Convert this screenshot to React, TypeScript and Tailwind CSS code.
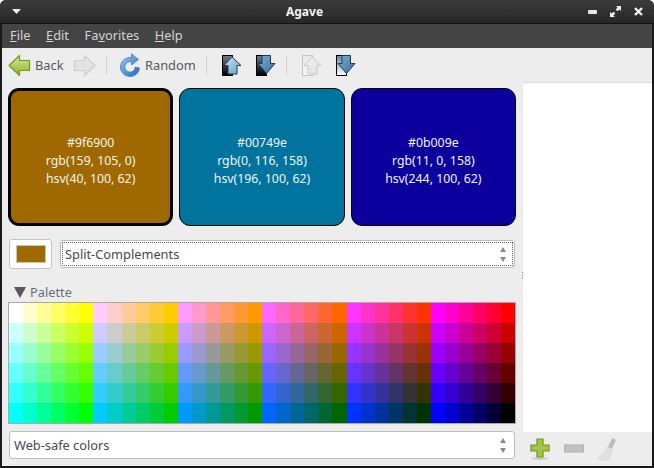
import React from 'react';

const SWATCHES = [
  { hex: '#9f6900', rgb: 'rgb(159, 105, 0)', hsv: 'hsv(40, 100, 62)', cls: 'bg-[#9f6900] border-[3px]' },
  { hex: '#00749e', rgb: 'rgb(0, 116, 158)', hsv: 'hsv(196, 100, 62)', cls: 'bg-[#00749e] border' },
  { hex: '#0b009e', rgb: 'rgb(11, 0, 158)', hsv: 'hsv(244, 100, 62)', cls: 'bg-[#0b009e] border' },
];

const ROWS = [0, 1, 2, 3, 4, 5];
const COLS = Array.from({ length: 36 }, (_, i) => i);

function ArrowLeft() {
  return (
    <svg width="23" height="23" viewBox="0 0 23 23">
      <defs>
        <linearGradient id="backG" x1="0" y1="0" x2="0" y2="1">
          <stop offset="0" stopColor="#dcea96" />
          <stop offset="1" stopColor="#8fb02c" />
        </linearGradient>
      </defs>
      <path
        d="M1 11.5 L11.5 1.5 V6.5 H21.5 V16.5 H11.5 V21.5 Z"
        fill="url(#backG)"
        stroke="#6f9a1c"
        strokeWidth="1.2"
        strokeLinejoin="round"
      />
    </svg>
  );
}

function ArrowRight() {
  return (
    <svg width="23" height="23" viewBox="0 0 23 23">
      <path
        d="M22 11.5 L11.5 1.5 V6.5 H1.5 V16.5 H11.5 V21.5 Z"
        fill="#e4e4e4"
        stroke="#cfcfcf"
        strokeWidth="1.2"
        strokeLinejoin="round"
      />
    </svg>
  );
}

function Refresh() {
  return (
    <svg width="23" height="24" viewBox="0 0 23 24">
      <defs>
        <linearGradient id="refG" x1="0" y1="0" x2="1" y2="1">
          <stop offset="0" stopColor="#a4ccf0" />
          <stop offset="1" stopColor="#1f66b8" />
        </linearGradient>
      </defs>
      <path
        d="M13 4.6 A9.6 9.6 0 1 0 20.6 15 L16.2 14 A5.2 5.2 0 1 1 12.5 8.9 L12.5 12 L19.5 6.5 L12.5 0.8 V4.5 Z"
        fill="url(#refG)"
        stroke="#3f7fc4"
        strokeWidth="0.8"
        strokeLinejoin="round"
      />
    </svg>
  );
}

// page shape with a blue arrow on top, used for the four history buttons
function PageArrow({ dir, disabled, light }: { dir: 'up' | 'down'; disabled?: boolean; light?: boolean }) {
  const id = `${dir}${disabled ? 'D' : ''}${light ? 'L' : ''}`;
  const top = disabled ? '#e8e8e8' : light ? '#5f86a8' : '#6d7f8c';
  const bottom = disabled ? '#f6f6f6' : light ? '#ffffff' : '#000000';
  const edge = disabled ? '#c4c4c4' : '#000000';
  const arrowA = disabled ? '#f2f2f2' : dir === 'up' ? '#d4e8f6' : '#7fadd2';
  const arrowB = disabled ? '#e0e0e0' : dir === 'up' ? '#5f9ccb' : '#3a6f9f';
  const arrowEdge = disabled ? '#c8c8c8' : '#1c3c54';
  const d =
    dir === 'up'
      ? 'M11 3 L20 11.5 H16 V20 H7 V11.5 H3 Z'
      : 'M7 1.5 H15.5 V9.5 H20 L11.5 19.5 L3 9.5 H7 Z';
  return (
    <svg width="21" height="23" viewBox="0 0 21 23">
      <defs>
        <linearGradient id={`page${id}`} x1="0" y1="0" x2="0" y2="1">
          <stop offset="0" stopColor={top} />
          <stop offset="1" stopColor={bottom} />
        </linearGradient>
        <linearGradient id={`arrow${id}`} x1="0" y1="0" x2="1" y2="1">
          <stop offset="0" stopColor={arrowA} />
          <stop offset="1" stopColor={arrowB} />
        </linearGradient>
      </defs>
      <rect x="1.5" y="1.5" width="10" height="20" fill={`url(#page${id})`} stroke={edge} />
      <path d={d} fill={`url(#arrow${id})`} stroke={arrowEdge} strokeLinejoin="round" />
    </svg>
  );
}

function Spinner() {
  return (
    <svg width="10" height="18" viewBox="0 0 10 18" className="shrink-0">
      <path d="M5 2 L8 7 H2 Z" fill="#8a8a8a" />
      <path d="M5 17 L8 12 H2 Z" fill="#8a8a8a" />
    </svg>
  );
}

function Combo({ text, focused }: { text: string; focused?: boolean }) {
  return (
    <div className="h-[28px] flex-1 rounded-[3px] border border-[#bdbdbd] bg-white p-px">
      <div
        className={`flex h-full items-center justify-between pr-[5px] pl-[3px] ${
          focused ? 'outline-1 -outline-offset-1 outline-dotted outline-[#6a6a6a]' : ''
        }`}
      >
        <span className="pt-[2px] text-[12.8px] text-[#444a50]">{text}</span>
        <Spinner />
      </div>
    </div>
  );
}

export default function App() {
  return (
    <div className="flex h-[468px] w-[654px] flex-col overflow-hidden rounded-t-[6px] bg-[#1a1a1a] px-[2px] pb-[2px] font-['Noto_Sans',sans-serif]">
      {/* titlebar */}
      <div className="-mx-[2px] flex h-[24px] shrink-0 items-center justify-between border-b border-[#111] bg-gradient-to-b from-[#3b3b3b] to-[#272727] pr-[11px] pl-[12px]">
        <svg width="9" height="5" viewBox="0 0 9 5">
          <path d="M0 0 H9 L4.5 5 Z" fill="#f0f0f0" />
        </svg>
        <span className="text-[12px] font-bold text-[#f2f2f2]">Agave</span>
        <div className="flex items-center gap-[13px]">
          <svg width="9" height="4" viewBox="0 0 9 4">
            <rect width="9" height="4" rx="1" fill="#e8e8e8" />
          </svg>
          <svg width="11" height="11" viewBox="0 0 11 11">
            <path d="M6 0 H11 V5 L9.4 3.4 L7.5 5.3 L5.7 3.5 L7.6 1.6 Z M0 11 V6 L1.6 7.6 L3.5 5.7 L5.3 7.5 L3.4 9.4 L5 11 Z" fill="#f0f0f0" />
          </svg>
          <svg width="9" height="9" viewBox="0 0 9 9">
            <path d="M1 1 L8 8 M8 1 L1 8" stroke="#f0f0f0" strokeWidth="2.4" />
          </svg>
        </div>
      </div>

      {/* menubar */}
      <div className="flex h-[24px] shrink-0 items-center gap-[15.6px] bg-[#444444] pl-[8px] text-[12.8px] text-[#d4d4d4]">
        <span><u>F</u>ile</span>
        <span><u>E</u>dit</span>
        <span>Fa<u>v</u>orites</span>
        <span><u>H</u>elp</span>
      </div>

      {/* toolbar */}
      <div className="flex h-[34px] shrink-0 items-center bg-[#ededed] pl-[6px] text-[12.8px] text-[#555a5e]">
        <ArrowLeft />
        <span className="ml-[4px] w-[38px] pt-px">Back</span>
        <ArrowRight />
        <div className="mr-[12px] ml-[10px] h-[20px] w-px bg-[#d4d4d4]" />
        <Refresh />
        <span className="ml-[3px] w-[51px] pt-px">Random</span>
        <div className="mr-[14px] ml-[10px] h-[20px] w-px bg-[#d4d4d4]" />
        <PageArrow dir="up" />
        <div className="w-[13px]" />
        <PageArrow dir="down" />
        <div className="mr-[14px] ml-[10px] h-[20px] w-px bg-[#d4d4d4]" />
        <PageArrow dir="up" disabled />
        <div className="w-[13px]" />
        <PageArrow dir="down" light />
      </div>

      <div className="relative flex min-h-0 flex-1 bg-[#ededed]">
        {/* left pane */}
        <div className="flex w-[521px] shrink-0 flex-col pt-[6px] pr-[7px] pl-[6px]">
          <div className="grid h-[138px] grid-cols-3 gap-[6px]">
            {SWATCHES.map((s) => (
              <div
                key={s.hex}
                className={`flex flex-col items-center justify-center rounded-[11px] border-black pt-[8px] text-[12.3px] leading-[18px] text-[#f4f4f4] ${s.cls}`}
              >
                <span>{s.hex}</span>
                <span>{s.rgb}</span>
                <span>{s.hsv}</span>
              </div>
            ))}
          </div>

          <div className="mt-[13px] flex items-center gap-[8px] px-[1px]">
            <div className="flex h-[30px] w-[43px] items-center justify-center rounded-[3px] border border-[#c4c4c4] bg-white">
              <div className="h-[18px] w-[30px] border border-[#c4c4c4] bg-[#9f6900]" />
            </div>
            <Combo text="Split-Complements" focused />
          </div>

          <div className="mt-[14px] flex h-[19px] items-center pl-[6px] text-[12.8px] text-[#6a6e72]">
            <svg width="12" height="11" viewBox="0 0 12 11">
              <path d="M0 0 H12 L6 11 Z" fill="#595959" />
            </svg>
            <span className="ml-[4px]">Palette</span>
          </div>

          <div className="border border-[#a8a8a8]">
            {ROWS.map((r) => (
              <div key={r} className="flex h-[20px]">
                {COLS.map((c) => (
                  <div
                    key={c}
                    className="flex-1"
                    style={{
                      backgroundColor: `rgb(${255 - 51 * r}, ${255 - 51 * Math.floor(c / 6)}, ${255 - 51 * (c % 6)})`,
                    }}
                  />
                ))}
              </div>
            ))}
          </div>

          <div className="mt-[7px] flex px-[1px]">
            <Combo text="Web-safe colors" />
          </div>
        </div>

        {/* pane grip */}
        <div className="absolute top-[190px] left-[520px] h-[7px] w-px border-l border-dotted border-[#a0a0a0]" />

        {/* right pane */}
        <div className="flex flex-1 flex-col">
          <div className="flex-1 border-t border-[#dcdcdc] bg-white" />
          <div className="flex h-[34px] shrink-0 items-center gap-[14px] pl-[7px]">
            <svg width="20" height="22" viewBox="0 0 20 22">
              <ellipse cx="10" cy="20.5" rx="9" ry="1.5" fill="#cfcfcf" />
              <path d="M7 1 H13 V7 H19 V13 H13 V19 H7 V13 H1 V7 H7 Z" fill="#a6c44a" stroke="#6f9a1c" strokeWidth="1.2" />
            </svg>
            <svg width="20" height="10" viewBox="0 0 20 10">
              <rect x="0.5" y="1" width="19" height="7" fill="#c6c0c0" stroke="#b4aeae" />
            </svg>
            <svg width="20" height="24" viewBox="0 0 20 24">
              <path d="M14 1 L18 3 L14 12 L10 10 Z" fill="#bcbcbc" />
              <path d="M9 10 L14.5 12.5 C13 17 11 21 10 23 H2 C1.5 22 1 21 1 20 C5 18 8 14 9 10 Z" fill="#e2e2da" stroke="#d0d0c8" strokeWidth="0.6" />
            </svg>
          </div>
        </div>
      </div>
    </div>
  );
}
